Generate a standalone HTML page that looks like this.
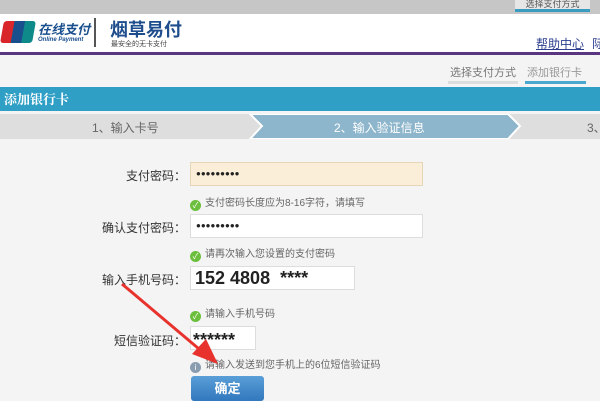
<!DOCTYPE html>
<html><head><meta charset="utf-8"><style>
*{margin:0;padding:0;box-sizing:border-box}
body{width:600px;height:401px;overflow:hidden;background:#f4f4f4;font-family:"Liberation Sans","Noto Sans CJK SC",sans-serif;position:relative}
.a{position:absolute}
.lbl{font-size:12px;color:#333;text-align:right;width:110px;left:76px}
.inp{background:#fff;border:1px solid #ddd;height:24px;left:190px}
.dots{font-size:8px;line-height:22px;padding-left:5px;color:#222;letter-spacing:0}
.tip{font-size:10px;color:#666;left:190px}
.ck{display:inline-block;width:11px;height:11px;border-radius:50%;background:#6cbf3c;vertical-align:-2px;margin-right:4px;color:#fff;font-size:8px;text-align:center;line-height:11px}
</style></head><body>
<div class="a" style="left:0;top:0;width:600px;height:14px;background:#c6c6c6"></div>
<div class="a" style="left:515px;top:0;width:75px;height:12px;background:#e6e6e6;border-bottom:3px solid #3a9dc0;font-size:9px;color:#555;text-align:center;line-height:8px">选择支付方式</div>
<div class="a" style="left:0;top:14px;width:600px;height:38px;background:#fff"></div>
<div class="a" style="left:2px;top:21px;width:32px;height:22px;background:linear-gradient(90deg,#d8262a 33%,#1a4f8e 33% 66%,#0f8a8a 66%);border-radius:3px;transform:skewX(-10deg)"></div>
<div class="a" style="left:38px;top:19px;font-size:13px;font-style:italic;font-weight:bold;color:#1a4f8e">在线支付</div>
<div class="a" style="left:38px;top:37px;font-size:6px;font-style:italic;font-weight:bold;color:#1a4f8e">Online Payment</div>
<div class="a" style="left:94px;top:18px;width:2px;height:29px;background:#555"></div>
<div class="a" style="left:110px;top:16px;font-size:18px;font-weight:bold;color:#1d4d8c">烟草易付</div>
<div class="a" style="left:111px;top:39px;font-size:7px;color:#444">最安全的无卡支付</div>
<div class="a" style="left:536px;top:35px;font-size:12px;color:#2d3f8e;text-decoration:underline">帮助中心</div>
<div class="a" style="left:592px;top:35px;font-size:12px;color:#2d3f8e">际</div>
<div class="a" style="left:0;top:52px;width:600px;height:3px;background:#5a3580"></div>
<div class="a" style="left:448px;top:64px;font-size:11px;color:#777;border-bottom:3px solid #ddd;padding:0 2px 1px">选择支付方式</div>
<div class="a" style="left:525px;top:64px;font-size:11px;color:#999;border-bottom:3px solid #4aa8cf;padding:0 4px 1px 2px">添加银行卡</div>
<div class="a" style="left:0;top:87px;width:600px;height:24px;background:#2f9fc6;color:#fff;font-size:13px;font-weight:bold;line-height:24px;padding-left:4px;font-family:'Noto Serif CJK SC',serif">添加银行卡</div>
<svg class="a" style="left:0;top:114px" width="600" height="25">
<rect width="600" height="25" fill="#dedede"/>
<polygon points="250,0 508,0 520,12 508,25 250,25 262,12" fill="#8db5cb" stroke="#fff" stroke-width="2"/>
</svg>
<div class="a" style="left:92px;top:119px;font-size:12px;color:#666">1、输入卡号</div>
<div class="a" style="left:334px;top:119px;font-size:12px;color:#fff">2、输入验证信息</div>
<div class="a" style="left:587px;top:119px;font-size:12px;color:#666">3、</div>
<div class="a lbl" style="top:167px">支付密码：</div>
<div class="a inp dots" style="top:162px;width:233px;background:#fbeed8;border-color:#e6d6b8">●●●●●●●●●</div>
<div class="a tip" style="top:194px"><span class="ck">✓</span>支付密码长度应为8-16字符，请填写</div>
<div class="a lbl" style="top:219px">确认支付密码：</div>
<div class="a inp dots" style="top:214px;width:233px">●●●●●●●●●</div>
<div class="a tip" style="top:245px"><span class="ck">✓</span>请再次输入您设置的支付密码</div>
<div class="a lbl" style="top:271px">输入手机号码：</div>
<div class="a inp" style="top:266px;width:165px;font-size:18px;font-weight:bold;line-height:22px;padding-left:4px;color:#222">152 4808 &nbsp;****</div>
<div class="a tip" style="top:305px"><span class="ck">✓</span>请输入手机号码</div>
<div class="a lbl" style="top:332px">短信验证码：</div>
<div class="a inp" style="top:326px;width:66px;font-size:18px;font-weight:bold;line-height:26px;padding-left:2px;color:#222">******</div>
<div class="a tip" style="top:356px"><span class="ck" style="background:#8a9db0">i</span>请输入发送到您手机上的6位短信验证码</div>
<div class="a" style="left:191px;top:376px;width:73px;height:25px;background:linear-gradient(#5a9fd8,#3178bd);border-radius:3px;color:#fff;font-size:13px;font-weight:bold;text-align:center;line-height:25px">确定</div>
<svg class="a" style="left:0;top:0" width="600" height="401">
<line x1="122" y1="284" x2="205" y2="354" stroke="#e8322e" stroke-width="3"/>
<polygon points="218,364 192,354 206,339" fill="#e8322e"/>
</svg>
</body></html>
